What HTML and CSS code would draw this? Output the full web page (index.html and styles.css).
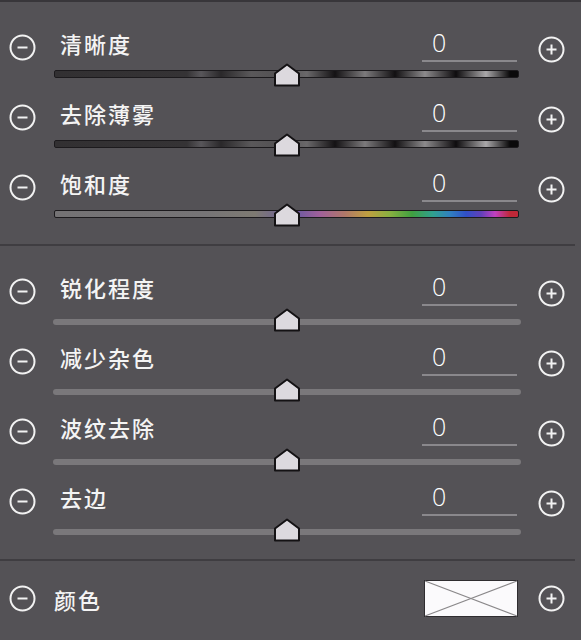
FILE: index.html
```html
<!DOCTYPE html>
<html lang="zh-CN">
<head>
  <meta charset="UTF-8">
  <title>细节面板</title>
  <link rel="stylesheet" href="styles.css">
</head>
<body>

<div class="panel">

  <!-- 色调 -->
  <section class="group group-tone">
    <div class="row">
      <svg class="btn btn-minus" viewBox="0 0 27 27"><circle cx="13.5" cy="13.5" r="12"/><line x1="8.5" y1="13.5" x2="18.5" y2="13.5"/></svg>
      <div class="body">
        <div class="head"><span class="label">清晰度</span><span class="value">0</span></div>
        <div class="slider"><div class="track track-dark"></div><svg class="thumb" viewBox="0 0 27 24"><path d="M13.5 1.5 L25.5 10.5 L25.5 22.5 L1.5 22.5 L1.5 10.5 Z"/></svg></div>
      </div>
      <svg class="btn btn-plus" viewBox="0 0 27 27"><circle cx="13.5" cy="13.5" r="12"/><line x1="8.5" y1="13.5" x2="18.5" y2="13.5"/><line x1="13.5" y1="8.5" x2="13.5" y2="18.5"/></svg>
    </div>

    <div class="row">
      <svg class="btn btn-minus" viewBox="0 0 27 27"><circle cx="13.5" cy="13.5" r="12"/><line x1="8.5" y1="13.5" x2="18.5" y2="13.5"/></svg>
      <div class="body">
        <div class="head"><span class="label">去除薄雾</span><span class="value">0</span></div>
        <div class="slider"><div class="track track-dark"></div><svg class="thumb" viewBox="0 0 27 24"><path d="M13.5 1.5 L25.5 10.5 L25.5 22.5 L1.5 22.5 L1.5 10.5 Z"/></svg></div>
      </div>
      <svg class="btn btn-plus" viewBox="0 0 27 27"><circle cx="13.5" cy="13.5" r="12"/><line x1="8.5" y1="13.5" x2="18.5" y2="13.5"/><line x1="13.5" y1="8.5" x2="13.5" y2="18.5"/></svg>
    </div>

    <div class="row">
      <svg class="btn btn-minus" viewBox="0 0 27 27"><circle cx="13.5" cy="13.5" r="12"/><line x1="8.5" y1="13.5" x2="18.5" y2="13.5"/></svg>
      <div class="body">
        <div class="head"><span class="label">饱和度</span><span class="value">0</span></div>
        <div class="slider"><div class="track track-rainbow"></div><svg class="thumb" viewBox="0 0 27 24"><path d="M13.5 1.5 L25.5 10.5 L25.5 22.5 L1.5 22.5 L1.5 10.5 Z"/></svg></div>
      </div>
      <svg class="btn btn-plus" viewBox="0 0 27 27"><circle cx="13.5" cy="13.5" r="12"/><line x1="8.5" y1="13.5" x2="18.5" y2="13.5"/><line x1="13.5" y1="8.5" x2="13.5" y2="18.5"/></svg>
    </div>
  </section>

  <!-- 细节 -->
  <section class="group group-detail">
    <div class="row">
      <svg class="btn btn-minus" viewBox="0 0 27 27"><circle cx="13.5" cy="13.5" r="12"/><line x1="8.5" y1="13.5" x2="18.5" y2="13.5"/></svg>
      <div class="body">
        <div class="head"><span class="label">锐化程度</span><span class="value">0</span></div>
        <div class="slider"><div class="track track-plain"></div><svg class="thumb" viewBox="0 0 27 24"><path d="M13.5 1.5 L25.5 10.5 L25.5 22.5 L1.5 22.5 L1.5 10.5 Z"/></svg></div>
      </div>
      <svg class="btn btn-plus" viewBox="0 0 27 27"><circle cx="13.5" cy="13.5" r="12"/><line x1="8.5" y1="13.5" x2="18.5" y2="13.5"/><line x1="13.5" y1="8.5" x2="13.5" y2="18.5"/></svg>
    </div>

    <div class="row">
      <svg class="btn btn-minus" viewBox="0 0 27 27"><circle cx="13.5" cy="13.5" r="12"/><line x1="8.5" y1="13.5" x2="18.5" y2="13.5"/></svg>
      <div class="body">
        <div class="head"><span class="label">减少杂色</span><span class="value">0</span></div>
        <div class="slider"><div class="track track-plain"></div><svg class="thumb" viewBox="0 0 27 24"><path d="M13.5 1.5 L25.5 10.5 L25.5 22.5 L1.5 22.5 L1.5 10.5 Z"/></svg></div>
      </div>
      <svg class="btn btn-plus" viewBox="0 0 27 27"><circle cx="13.5" cy="13.5" r="12"/><line x1="8.5" y1="13.5" x2="18.5" y2="13.5"/><line x1="13.5" y1="8.5" x2="13.5" y2="18.5"/></svg>
    </div>

    <div class="row">
      <svg class="btn btn-minus" viewBox="0 0 27 27"><circle cx="13.5" cy="13.5" r="12"/><line x1="8.5" y1="13.5" x2="18.5" y2="13.5"/></svg>
      <div class="body">
        <div class="head"><span class="label">波纹去除</span><span class="value">0</span></div>
        <div class="slider"><div class="track track-plain"></div><svg class="thumb" viewBox="0 0 27 24"><path d="M13.5 1.5 L25.5 10.5 L25.5 22.5 L1.5 22.5 L1.5 10.5 Z"/></svg></div>
      </div>
      <svg class="btn btn-plus" viewBox="0 0 27 27"><circle cx="13.5" cy="13.5" r="12"/><line x1="8.5" y1="13.5" x2="18.5" y2="13.5"/><line x1="13.5" y1="8.5" x2="13.5" y2="18.5"/></svg>
    </div>

    <div class="row">
      <svg class="btn btn-minus" viewBox="0 0 27 27"><circle cx="13.5" cy="13.5" r="12"/><line x1="8.5" y1="13.5" x2="18.5" y2="13.5"/></svg>
      <div class="body">
        <div class="head"><span class="label">去边</span><span class="value">0</span></div>
        <div class="slider"><div class="track track-plain"></div><svg class="thumb" viewBox="0 0 27 24"><path d="M13.5 1.5 L25.5 10.5 L25.5 22.5 L1.5 22.5 L1.5 10.5 Z"/></svg></div>
      </div>
      <svg class="btn btn-plus" viewBox="0 0 27 27"><circle cx="13.5" cy="13.5" r="12"/><line x1="8.5" y1="13.5" x2="18.5" y2="13.5"/><line x1="13.5" y1="8.5" x2="13.5" y2="18.5"/></svg>
    </div>
  </section>

  <!-- 颜色 -->
  <section class="group group-color">
    <div class="row row-color">
      <svg class="btn btn-minus" viewBox="0 0 27 27"><circle cx="13.5" cy="13.5" r="12"/><line x1="8.5" y1="13.5" x2="18.5" y2="13.5"/></svg>
      <div class="body body-color">
        <span class="label">颜色</span>
        <svg class="swatch" viewBox="0 0 94 37">
          <rect x="0.5" y="0.5" width="93" height="36"/>
          <line x1="1" y1="1" x2="93" y2="36"/>
          <line x1="1" y1="36" x2="93" y2="1"/>
        </svg>
      </div>
      <svg class="btn btn-plus" viewBox="0 0 27 27"><circle cx="13.5" cy="13.5" r="12"/><line x1="8.5" y1="13.5" x2="18.5" y2="13.5"/><line x1="13.5" y1="8.5" x2="13.5" y2="18.5"/></svg>
    </div>
  </section>

</div>

</body>
</html>
```

FILE: styles.css
```css
body {
  margin: 0;
  background: #545256;
  font-family: 'Noto Sans CJK SC', 'Noto Sans', sans-serif;
  color: #f4f4f4;
}
.panel {
  width: 581px;
  height: 640px;
  border-top: 2px solid #38363a;
  box-sizing: border-box;
  overflow: hidden;
}
.group {
  margin-right: 6px;
  border-bottom: 2px solid #3f3d41;
}
.group-tone {
  padding: 26px 0 6px;
}
.group-detail {
  padding: 26px 0 7px;
}
.group-color {
  border-bottom: none;
  padding-top: 19px;
}
.row {
  display: grid;
  grid-template-columns: 54px 465px 1fr;
  height: 70px;
}
.btn {
  width: 27px;
  height: 27px;
  fill: none;
  stroke: #f2f2f2;
  stroke-width: 2;
}
.btn-minus {
  margin: 6px 0 0 9px;
}
.btn-plus {
  margin: 8px 0 0 19px;
}
.head {
  display: flex;
  justify-content: space-between;
  height: 34px;
}
.label {
  padding-left: 6px;
  font-size: 22px;
  font-weight: 500;
  line-height: 30px;
  letter-spacing: 2px;
}
.value {
  width: 95px;
  height: 34px;
  margin-right: 2px;
  padding-left: 10px;
  box-sizing: border-box;
  border-bottom: 2px solid #8a888c;
  font-family: 'Open Sans', 'Noto Sans', sans-serif;
  font-weight: 300;
  font-size: 25px;
  line-height: 29px;
  color: #ffffff;
}
.slider {
  position: relative;
  height: 26px;
  box-sizing: border-box;
}
.group-tone .slider {
  padding-top: 8px;
}
.group-detail .slider {
  padding-top: 13px;
}
.track {
  box-sizing: border-box;
}
.track-dark,
.track-rainbow {
  height: 8px;
  border: 1px solid #1c1a1d;
  border-radius: 2px;
}
.track-dark {
  background: linear-gradient(to right,
    #323032 0, #353335 132px, #58565a 146px, #2a282a 166px, #5a585a 196px,
    #525052 226px, #6a686a 252px, #141214 280px, #7c7a7c 310px, #121012 340px,
    #8c8a8c 370px, #0e0c0e 401px, #aaa8aa 431px, #0a090a 455px);
}
.track-rainbow {
  background: linear-gradient(to right,
    #747274 0, #767476 150px, #7e7a72 200px, #6a5aa0 240px, #a0609a 265px,
    #b07868 290px, #c0a040 313px, #88b040 335px, #40a040 357px, #30a090 378px,
    #3080c0 395px, #3050c8 411px, #6040b8 426px, #c040c0 440px, #c02838 455px);
}
.track-plain {
  margin: 0 -2px 0 -1px;
  height: 6px;
  background: #7a787b;
  border-radius: 3px;
}
.thumb {
  position: absolute;
  top: 1px;
  left: 50%;
  width: 27px;
  height: 24px;
  transform: translateX(-50%);
  fill: #dcd9de;
  stroke: #141214;
  stroke-width: 2;
  stroke-linejoin: round;
}
.group-detail .thumb {
  top: 2px;
}
.row-color {
  height: 37px;
  align-items: center;
}
.row-color .btn {
  margin-top: 0;
}
.body-color {
  display: flex;
  justify-content: space-between;
  align-items: center;
}
.body-color .label {
  padding-left: 0;
  letter-spacing: 2px;
}
.swatch {
  width: 94px;
  height: 37px;
  margin-right: 1px;
}
.swatch rect {
  fill: #fbfafc;
  stroke: #2f2d30;
}
.swatch line {
  stroke: #8a888a;
  stroke-width: 1.2;
}
```
